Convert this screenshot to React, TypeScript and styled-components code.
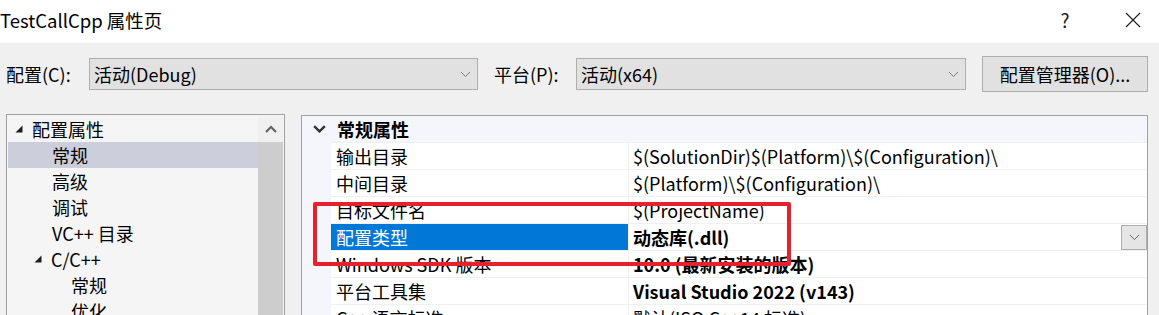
import React from 'react';
import styled, { createGlobalStyle } from 'styled-components';

const GlobalStyle = createGlobalStyle`
  html, body {
    margin: 0;
    padding: 0;
    background: #f0f0f0;
  }
  body {
    font-family: "Noto Sans CJK SC", "Noto Sans", sans-serif;
    font-size: 18px;
    color: #000;
  }
`;

const Window = styled.div`
  width: 1159px;
  height: 315px;
  overflow: hidden;
  display: flex;
  flex-direction: column;
  background: #f0f0f0;
  & > * {
    flex-shrink: 0;
  }
`;

const TitleBar = styled.div`
  height: 43px;
  background: #fff;
  display: flex;
  align-items: center;
  padding: 0 11px 4px 0;
  box-sizing: border-box;
`;

const Title = styled.div`
  flex: 1;
  font-size: 18.5px;
  line-height: 24px;
`;

const TitleButton = styled.div<{ $w: number; $gap?: number }>`
  width: ${(p) => p.$w}px;
  margin-left: ${(p) => p.$gap || 0}px;
  display: flex;
  justify-content: center;
  color: #1a1a1a;
  font-size: 19px;
  line-height: 24px;
`;

const Toolbar = styled.div`
  display: flex;
  align-items: center;
  height: 56px;
  padding: 6px 11px 0 6px;
  box-sizing: border-box;
`;

const Label = styled.span<{ $w: number }>`
  width: ${(p) => p.$w}px;
  flex-shrink: 0;
  line-height: 24px;
`;

const Combo = styled.div<{ $w: number }>`
  width: ${(p) => p.$w}px;
  height: 32px;
  box-sizing: border-box;
  border: 1px solid #adadad;
  background: #e1e1e1;
  display: flex;
  align-items: center;
  padding: 0 6px 0 4px;
  margin-right: 16px;
`;

const ComboText = styled.span`
  flex: 1;
`;

const ManagerButton = styled.div`
  width: 166px;
  height: 36px;
  box-sizing: border-box;
  border: 1px solid #adadad;
  background: #e1e1e1;
  display: flex;
  align-items: center;
  justify-content: center;
`;

const Panels = styled.div`
  display: flex;
  align-items: flex-start;
  padding: 15px 11px 0 6px;
  gap: 16px;
`;

const TreePanel = styled.div`
  width: 279px;
  height: 240px;
  flex-shrink: 0;
  box-sizing: border-box;
  border: 1px solid #a0a0a0;
  background: #f5f5f5;
  display: flex;
  padding: 1px 1px 0 1px;
`;

const TreeList = styled.div`
  flex: 1;
  display: flex;
  flex-direction: column;
`;

const TreeRow = styled.div<{ $indent: number; $selected?: boolean }>`
  height: 26px;
  display: flex;
  align-items: center;
  padding-left: ${(p) => p.$indent}px;
  background: ${(p) => (p.$selected ? '#cccedb' : 'transparent')};
  white-space: nowrap;
`;

const Expander = styled.span`
  width: 17px;
  display: flex;
  align-items: center;
`;

const ScrollBar = styled.div`
  width: 25px;
  display: flex;
  flex-direction: column;
  background: #f0f0f0;
`;

const ScrollArrow = styled.div`
  height: 26px;
  display: flex;
  align-items: center;
  justify-content: center;
`;

const ScrollThumb = styled.div`
  flex: 1;
  background: #cdcdcd;
`;

const Grid = styled.div`
  position: relative;
  flex: 1;
  height: 240px;
  box-sizing: border-box;
  border: 1px solid #a0a0a0;
  background: #f4f6fb;
  margin-top: 1px;
`;

const GroupHeader = styled.div`
  height: 26px;
  display: flex;
  align-items: center;
  font-weight: bold;
`;

const GroupToggle = styled.span`
  width: 35px;
  display: flex;
  justify-content: center;
`;

const PropRow = styled.div`
  height: 26px;
  display: flex;
  margin-left: 29px;
  border-top: 1px solid #f0f0f0;
  background: #fff;
`;

const NameCell = styled.div<{ $selected?: boolean }>`
  width: 298px;
  flex-shrink: 0;
  box-sizing: border-box;
  padding-left: 5px;
  display: flex;
  align-items: center;
  white-space: nowrap;
  border-right: 1px solid #f0f0f0;
  background: ${(p) => (p.$selected ? '#0078d7' : 'transparent')};
  color: ${(p) => (p.$selected ? '#fff' : '#000')};
`;

const ValueCell = styled.div<{ $bold?: boolean }>`
  flex: 1;
  display: flex;
  align-items: center;
  padding-left: 4px;
  white-space: nowrap;
  font-weight: ${(p) => (p.$bold ? 'bold' : 'normal')};
`;

const ValueText = styled.span`
  flex: 1;
`;

const DropButton = styled.div`
  width: 26px;
  height: 25px;
  box-sizing: border-box;
  border: 1px solid #adadad;
  background: #e5e5e5;
  display: flex;
  align-items: center;
  justify-content: center;
`;

const Highlight = styled.div`
  position: absolute;
  left: 11px;
  top: 86px;
  width: 478px;
  height: 64px;
  box-sizing: border-box;
  border: 4px solid #e8202c;
  border-radius: 2px;
  pointer-events: none;
`;

function Chevron({ color = '#444', size = 12, weight = 1 }: { color?: string; size?: number; weight?: number }) {
  return (
    <svg width={size} height={size / 2 + 1} viewBox="0 0 12 7">
      <polyline points="1,1 6,6 11,1" fill="none" stroke={color} strokeWidth={weight} />
    </svg>
  );
}

function ExpandedMark() {
  return (
    <svg width="8" height="8" viewBox="0 0 8 8">
      <polygon points="7.5,0.5 7.5,7.5 0.5,7.5" fill="#1e1e1e" />
    </svg>
  );
}

const treeItems: { text: string; indent: number; expanded?: boolean; selected?: boolean }[] = [
  { text: '配置属性', indent: 7, expanded: true },
  { text: '常规', indent: 44, selected: true },
  { text: '高级', indent: 44 },
  { text: '调试', indent: 44 },
  { text: 'VC++ 目录', indent: 44 },
  { text: 'C/C++', indent: 26, expanded: true },
  { text: '常规', indent: 63 },
  { text: '优化', indent: 63 },
];

const props: { name: string; value: string; bold?: boolean; selected?: boolean }[] = [
  { name: '输出目录', value: '$(SolutionDir)$(Platform)\\$(Configuration)\\' },
  { name: '中间目录', value: '$(Platform)\\$(Configuration)\\' },
  { name: '目标文件名', value: '$(ProjectName)' },
  { name: '配置类型', value: '动态库(.dll)', bold: true, selected: true },
  { name: 'Windows SDK 版本', value: '10.0 (最新安装的版本)', bold: true },
  { name: '平台工具集', value: 'Visual Studio 2022 (v143)', bold: true },
  { name: 'C++ 语言标准', value: '默认(ISO C++14 标准)' },
];

export default function App() {
  return (
    <Window>
      <GlobalStyle />
      <TitleBar>
        <Title>TestCallCpp 属性页</Title>
        <TitleButton $w={30}>?</TitleButton>
        <TitleButton $w={30} $gap={38}>
          <svg width="16" height="16" viewBox="0 0 16 16">
            <path d="M1 1 L15 15 M15 1 L1 15" stroke="#1a1a1a" strokeWidth="1.1" />
          </svg>
        </TitleButton>
      </TitleBar>

      <Toolbar>
        <Label $w={83}>配置(C):</Label>
        <Combo $w={389}>
          <ComboText>活动(Debug)</ComboText>
          <Chevron color="#707070" size={11} />
        </Combo>
        <Label $w={82}>平台(P):</Label>
        <Combo $w={390}>
          <ComboText>活动(x64)</ComboText>
          <Chevron color="#707070" size={11} />
        </Combo>
        <ManagerButton>配置管理器(O)...</ManagerButton>
      </Toolbar>

      <Panels>
        <TreePanel>
          <TreeList>
            {treeItems.map((item, i) => (
              <TreeRow key={i} $indent={item.indent} $selected={item.selected}>
                {item.expanded && (
                  <Expander>
                    <ExpandedMark />
                  </Expander>
                )}
                {item.text}
              </TreeRow>
            ))}
          </TreeList>
          <ScrollBar>
            <ScrollArrow>
              <svg width="12" height="8" viewBox="0 0 12 8">
                <polyline points="1,7 6,2 11,7" fill="none" stroke="#606060" strokeWidth="2" />
              </svg>
            </ScrollArrow>
            <ScrollThumb />
          </ScrollBar>
        </TreePanel>

        <Grid>
          <GroupHeader>
            <GroupToggle>
              <Chevron color="#333" size={13} weight={2.2} />
            </GroupToggle>
            常规属性
          </GroupHeader>
          {props.map((p) => (
            <PropRow key={p.name}>
              <NameCell $selected={p.selected}>{p.name}</NameCell>
              <ValueCell $bold={p.bold}>
                <ValueText>{p.value}</ValueText>
                {p.selected && (
                  <DropButton>
                    <Chevron color="#555" size={11} />
                  </DropButton>
                )}
              </ValueCell>
            </PropRow>
          ))}
          <Highlight />
        </Grid>
      </Panels>
    </Window>
  );
}
